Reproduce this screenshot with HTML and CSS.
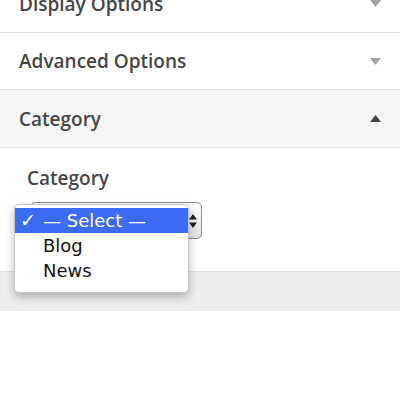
FILE: index.html
```html
<!DOCTYPE html>
<html>
<head>
<meta charset="utf-8">
<link rel="stylesheet" href="styles.css">
</head>
<body>
<div class="panel">
  <div class="row first">
    <span class="title">Display Options</span>
    <svg class="arrow" width="11" height="7" viewBox="0 0 11 7"><path d="M0 0H11L5.5 7Z" fill="#a3a3a3"/></svg>
  </div>
  <div class="row">
    <span class="title">Advanced Options</span>
    <svg class="arrow" width="11" height="7" viewBox="0 0 11 7"><path d="M0 0H11L5.5 7Z" fill="#a3a3a3"/></svg>
  </div>
  <div class="row open">
    <span class="title">Category</span>
    <svg class="arrow" width="11" height="7" viewBox="0 0 11 7"><path d="M0 7H11L5.5 0Z" fill="#444"/></svg>
  </div>
  <div class="content">
    <div class="label">Category</div>
    <div class="selectbox">
      <svg class="updown" width="8" height="14" viewBox="0 0 8 14"><path d="M0 5.5H8L4 0Z M0 8.5H8L4 14Z" fill="#222"/></svg>
    </div>
    <div class="popup">
      <div class="opt selected"><span class="check">✓</span>— Select —</div>
      <div class="opt">Blog</div>
      <div class="opt">News</div>
    </div>
  </div>
  <div class="footer"></div>
</div>
</body>
</html>
```
FILE: styles.css
```css
html, body {
  margin: 0;
  padding: 0;
  background: #fff;
}
body {
  font-family: "Open Sans", "Liberation Sans", sans-serif;
  overflow: hidden;
}
.panel {
  margin-top: -25px;
}
.row {
  height: 57px;
  border-bottom: 1px solid #e3e3e3;
  display: flex;
  align-items: center;
  justify-content: space-between;
  padding: 0 19px 0 19px;
  box-sizing: content-box;
}
.row + .row { height: 56px; }
.row.open {
  background: #f5f5f5;
  height: 57px;
}
.title {
  font-size: 19px;
  font-weight: 600;
  color: #464646;
}
.arrow {
  display: block;
}
.content {
  position: relative;
  padding: 17px 0 32px 27px;
}
.label {
  font-size: 19px;
  font-weight: 600;
  color: #464646;
  line-height: 26px;
}
.selectbox {
  margin-top: 11px;
  margin-left: 3px;
  width: 166px;
  height: 35px;
  border: 1px solid #8c8c8c;
  border-radius: 5px;
  background: linear-gradient(#fdfdfd, #e2e2e2);
  display: flex;
  align-items: center;
  justify-content: flex-end;
  padding-right: 4px;
  box-sizing: content-box;
}
.updown { display: block; }
.popup {
  position: absolute;
  left: 14px;
  top: 56px;
  width: 173px;
  height: 84px;
  background: #fff;
  border: 1px solid #c4c4c4;
  border-radius: 5px;
  box-shadow: 0 4px 10px rgba(0,0,0,0.28);
  padding-top: 3px;
  box-sizing: content-box;
  font-family: "DejaVu Sans", "Liberation Sans", sans-serif;
}
.opt {
  height: 25px;
  line-height: 25px;
  font-size: 18px;
  color: #111;
  padding-left: 28px;
  position: relative;
}
.opt.selected {
  background: #3c6cf3;
  color: #fff;
}
.check {
  position: absolute;
  left: 5px;
  top: 0;
  font-size: 19px;
  font-weight: bold;
}
.footer {
  height: 39px;
  background: #eeeeee;
  border-top: 1px solid #e3e3e3;
}
```
